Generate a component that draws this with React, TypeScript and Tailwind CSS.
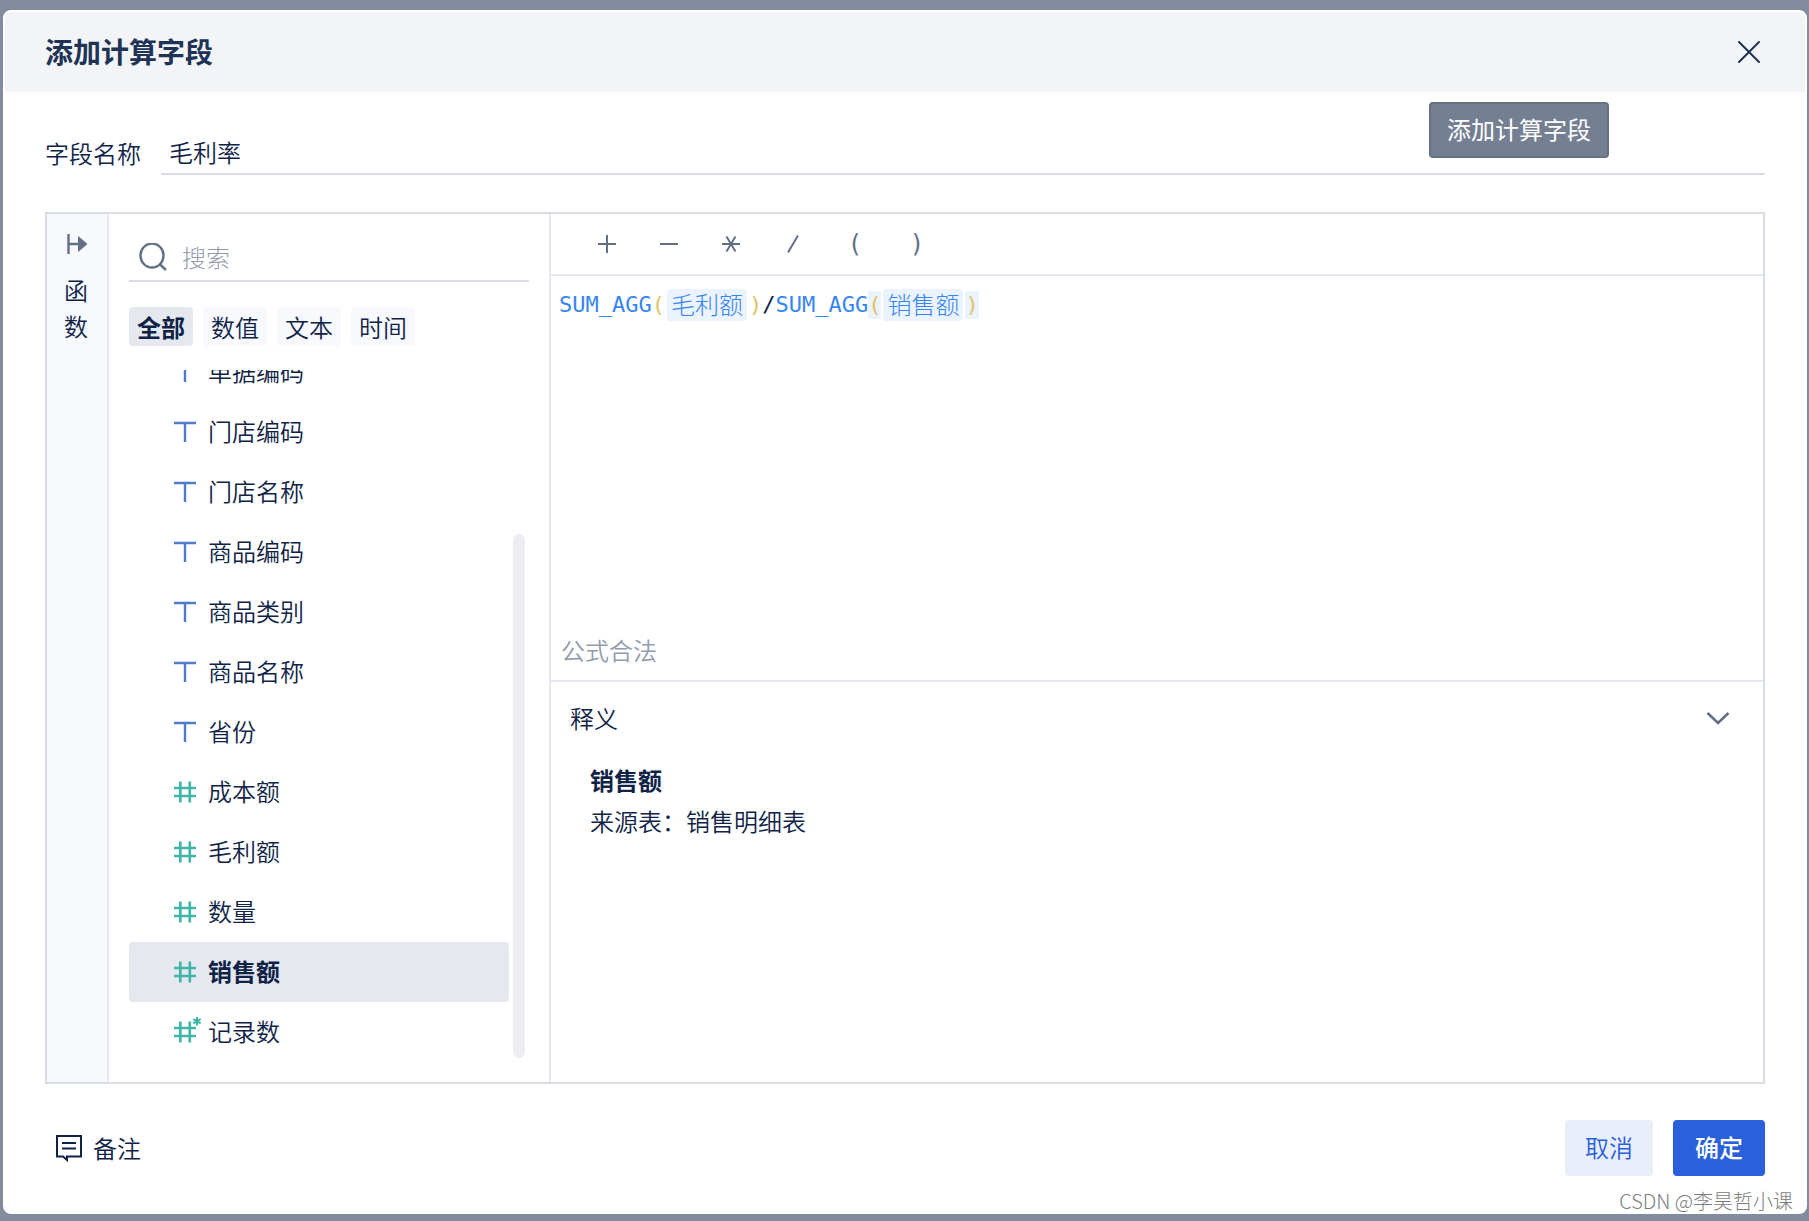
import { clsx } from "clsx";

type FieldType = "text" | "number" | "count";

interface Field {
   name: string;
   type: FieldType;
}

const fields: Field[] = [
   { name: "单据编码", type: "text" },
   { name: "门店编码", type: "text" },
   { name: "门店名称", type: "text" },
   { name: "商品编码", type: "text" },
   { name: "商品类别", type: "text" },
   { name: "商品名称", type: "text" },
   { name: "省份", type: "text" },
   { name: "成本额", type: "number" },
   { name: "毛利额", type: "number" },
   { name: "数量", type: "number" },
   { name: "销售额", type: "number" },
   { name: "记录数", type: "count" }
];

const tabs = ["全部", "数值", "文本", "时间"];
const activeTab = "全部";
const activeField = "销售额";

const FieldIcon = ({ type }: { type: FieldType }) => {
   if (type === "text") {
      return (
         <svg className="h-7 w-7 shrink-0 text-[#4f7bcb]" viewBox="0 0 28 28" fill="none" stroke="currentColor" strokeWidth="2.4">
            <path d="M3 5H25M14 5V24" />
         </svg>
      );
   }
   return (
      <svg className="h-7 w-7 shrink-0 overflow-visible text-[#3fb5a8]" viewBox="0 0 28 28" fill="none" stroke="currentColor" strokeWidth="2.6">
         <path d="M3 10H25M3 18H25M9.3 3.5V24.5M18.8 3.5V24.5" />
         {type === "count" && <path d="M26 -1V7.5M22.3 1.1L29.7 5.4M22.3 5.4L29.7 1.1" strokeWidth="2" />}
      </svg>
   );
};

const operators = [
   { label: "加", icon: <path d="M1 10H19M10 1V19" /> },
   { label: "减", icon: <path d="M1 10H19" /> },
   { label: "乘", icon: <path d="M1 10H19M5.5 2.5L14.5 17.5M14.5 2.5L5.5 17.5" /> },
   { label: "除", icon: <path d="M5 18.5L15 1.5" /> },
   { label: "左括号", text: "(" },
   { label: "右括号", text: ")" }
];

const Chip = ({ children }: { children: string }) => (
   <span className="mx-[2px] h-8 rounded-sm bg-[#ebf3ff] px-1 font-['Noto_Sans_CJK_SC',sans-serif] text-2xl leading-[30px] font-light text-[#3685f2]">
      {children}
   </span>
);

const FieldPane = () => (
   <section className="flex w-[440px] shrink-0 flex-col pl-5">
      <label className="mt-5 mr-5 flex h-12 items-center gap-[15px] border-b-2 border-[#d8dce5] pl-2.5">
         <svg className="h-7 w-7 shrink-0 text-[#627087]" viewBox="0 0 28 28" fill="none" stroke="currentColor" strokeWidth="2.4">
            <ellipse cx="13" cy="12.5" rx="11.5" ry="12" />
            <path d="M20.5 21L27 27" />
         </svg>
         <input
            type="search"
            aria-label="搜索"
            placeholder="搜索"
            className="h-10 w-full min-w-0 bg-transparent pb-[2px] font-light outline-none placeholder:text-[#939cad]"
         />
      </label>
      <div className="mt-[25px] flex gap-2.5">
         {tabs.map((tab) => (
            <button
               key={tab}
               type="button"
               className={clsx(
                  "h-[39px] rounded px-2 leading-[38px]",
                  tab === activeTab ? "bg-[#e5e8ef] font-bold" : "bg-[#f7f9fd]"
               )}
            >
               {tab}
            </button>
         ))}
      </div>
      <div className="mt-6 mr-6 mb-5 flex flex-1 gap-1 overflow-hidden">
         {/* list is scrolled down, so the first row is cut by the top edge */}
         <ul className="-mt-7 flex-1">
            {fields.map((field) => (
               <li key={field.name}>
                  <button
                     type="button"
                     className={clsx(
                        "flex h-[60px] w-full items-center gap-[9px] rounded pl-[42px]",
                        field.name === activeField && "bg-[#e5e8ef] font-bold"
                     )}
                  >
                     <FieldIcon type={field.type} />
                     <span className="pb-[2px]">{field.name}</span>
                  </button>
               </li>
            ))}
         </ul>
         <div className="mb-1 h-[524px] w-3 self-end rounded-full bg-[#eceef3]" />
      </div>
   </section>
);

const FormulaPane = () => (
   <section className="flex min-w-0 flex-1 flex-col border-l-2 border-[#e5e8ef]">
      <div className="flex h-[62px] shrink-0 items-center border-b-2 border-[#e5e8ef] pl-[25px]">
         {operators.map((op) => (
            <button
               key={op.label}
               type="button"
               aria-label={op.label}
               className="flex w-[62px] items-center justify-center font-['DejaVu_Sans_Mono',monospace] text-2xl text-[#627087]"
            >
               {op.icon ? (
                  <svg className="h-5 w-5" viewBox="0 0 20 20" fill="none" stroke="currentColor" strokeWidth="2">
                     {op.icon}
                  </svg>
               ) : (
                  op.text
               )}
            </button>
         ))}
      </div>
      <div className="flex flex-1 flex-col justify-between border-b-2 border-[#e5e8ef] pt-[13px] pr-2 pb-3 pl-2">
         <code className="flex items-center font-['DejaVu_Sans_Mono',monospace] text-[22px] leading-7 text-[#3685f2]">
            <span>SUM_AGG</span>
            <span className="text-[#e2c264]">(</span>
            <Chip>毛利额</Chip>
            <span className="text-[#e2c264]">)</span>
            <span className="text-[#0f2347]">/</span>
            <span>SUM_AGG</span>
            <span className="bg-[#ebf3ff] text-[#e2c264]">(</span>
            <Chip>销售额</Chip>
            <span className="bg-[#ebf3ff] text-[#e2c264]">)</span>
         </code>
         <p className="pl-[2px] leading-9 text-[#939cad]">公式合法</p>
      </div>
      <div className="h-[400px] shrink-0 pl-[19px]">
         <button type="button" className="flex h-[72px] w-full items-center justify-between pr-[33px]">
            <span>释义</span>
            <svg className="h-6 w-6 text-[#627087]" viewBox="0 0 24 24" fill="none" stroke="currentColor" strokeWidth="2.6">
               <path d="M1.5 7L12 17L22.5 7" />
            </svg>
         </button>
         <div className="mt-[5px] pl-5 leading-[41px]">
            <h2 className="font-bold">销售额</h2>
            <p>来源表：销售明细表</p>
         </div>
      </div>
   </section>
);

const App = () => {
   return (
      <div className="relative flex min-h-screen flex-col bg-[#828c9e] px-[3px] pt-2.5 pr-[2px] pb-[7px] font-['Noto_Sans_CJK_SC',sans-serif] text-2xl font-[350] text-[#0f2347]">
         <main role="dialog" aria-label="添加计算字段" className="flex flex-1 flex-col rounded-lg border-2 border-white bg-white">
            <header className="flex h-20 shrink-0 items-center justify-between rounded-t-md bg-[#f2f4f8] px-10 text-[#203354]">
               <h1 className="pb-[3px] text-[28px] leading-10 font-bold">添加计算字段</h1>
               <button type="button" aria-label="关闭" className="mr-1">
                  <svg className="h-6 w-6" viewBox="0 0 24 24" fill="none" stroke="currentColor" strokeWidth="2" strokeLinecap="round">
                     <path d="M2 2L22 22M22 2L2 22" />
                  </svg>
               </button>
            </header>
            <div className="mx-10 mt-10 flex items-center gap-5">
               <label htmlFor="field-name" className="pb-[2px]">字段名称</label>
               <input
                  id="field-name"
                  defaultValue="毛利率"
                  className="h-[43px] min-w-0 flex-1 border-b-2 border-[#d8dce5] pb-[2px] pl-2 outline-none"
               />
            </div>
            <div className="mx-10 mt-[37px] flex flex-1 border-2 border-[#d8dce5]">
               <aside className="flex w-[62px] shrink-0 flex-col items-center border-r-2 border-[#e5e8ef] bg-[#f7f9fd] pt-5">
                  <button type="button" className="flex flex-col items-center">
                     <svg className="h-5 w-5 text-[#627087]" viewBox="0 0 20 20" fill="none" stroke="currentColor" strokeWidth="2.4">
                        <path d="M1.5 0V20M1.5 10H12" />
                        <path d="M11 2L20.5 10L11 18Z" fill="currentColor" stroke="none" />
                     </svg>
                     <span className="mt-[18px] w-[26px] pr-[2px] leading-9">函数</span>
                  </button>
               </aside>
               <FieldPane />
               <FormulaPane />
            </div>
            <footer className="mx-10 mt-9 mb-9 flex items-center justify-between">
               <button type="button" className="flex items-center gap-2.5 pl-2.5">
                  <svg className="h-7 w-7" viewBox="0 0 28 28" fill="none" stroke="currentColor" strokeWidth="2">
                     <path d="M2 2H26V22.5H12V26L8 22.5H2Z" />
                     <path d="M7 9H21M7 14.5H21" />
                  </svg>
                  备注
               </button>
               <div className="flex gap-5">
                  <button type="button" className="h-14 rounded bg-[#e8effb] px-5 pb-[2px] text-[#2b60dc]">取消</button>
                  <button type="button" className="h-14 rounded bg-[#2b60dc] px-[22px] pb-[2px] font-medium text-white">确定</button>
               </div>
            </footer>
         </main>
         <div role="tooltip" className="absolute top-[102px] right-[200px] h-14 rounded border-2 border-[#667184] bg-[#748092] px-4 leading-[50px] font-normal text-white">
            添加计算字段
         </div>
         <span className="absolute right-4 bottom-1 text-xl leading-8 font-light text-[#7c7c7c]">CSDN @李昊哲小课</span>
      </div>
   );
};

export default App;
